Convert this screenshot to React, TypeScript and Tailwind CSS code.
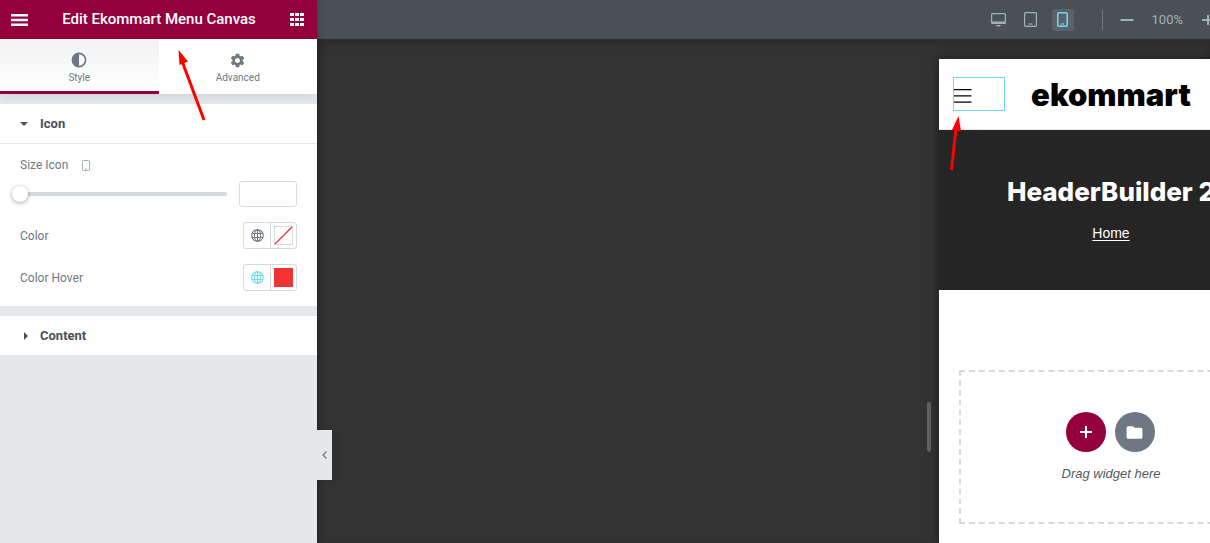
import { useState, type ReactNode } from "react";
import { MdFolder, MdSettings } from "react-icons/md";

type Device = "desktop" | "tablet" | "mobile";
type Tab = "style" | "advanced";

function MenuIcon() {
  return (
    <svg width="17" height="12" viewBox="0 0 17 12" fill="currentColor">
      <path d="M0 0h17v2.4H0zM0 4.8h17v2.4H0zM0 9.6h17V12H0z" />
    </svg>
  );
}

function AppsIcon() {
  return (
    <svg width="14" height="14" viewBox="0 0 14 14" fill="currentColor">
      <path d="M0 0h4v3H0zM5 0h4v3H5zM10 0h4v3h-4zM0 5h4v3H0zM5 5h4v3H5zM10 5h4v3h-4zM0 10h4v3H0zM5 10h4v3H5zM10 10h4v3h-4z" />
    </svg>
  );
}

function ContrastIcon() {
  return (
    <svg width="16" height="16" viewBox="0 0 16 16">
      <circle cx="8" cy="8" r="6.6" fill="none" stroke="currentColor" strokeWidth="1.6" />
      <path d="M8 1a7 7 0 0 0 0 14z" fill="currentColor" />
    </svg>
  );
}

function GlobeIcon() {
  return (
    <svg width="13" height="13" viewBox="0 0 13 13" fill="none" stroke="currentColor" strokeWidth="1.1">
      <circle cx="6.5" cy="6.5" r="5.8" />
      <ellipse cx="6.5" cy="6.5" rx="3" ry="5.8" />
      <path d="M6.5 1v11M1.2 4.5h10.6M1.2 8.5h10.6" />
    </svg>
  );
}

const deviceIcons: Record<Device, ReactNode> = {
  desktop: (
    <svg width="16" height="14" viewBox="0 0 16 14">
      <path d="M1.5 0h12A1.5 1.5 0 0 1 15 1.5v8a1.5 1.5 0 0 1-1.5 1.5h-12A1.5 1.5 0 0 1 0 9.5v-8A1.5 1.5 0 0 1 1.5 0zM1.2 1.2v7.3h12.6V1.2zM5 12h5l-1 1.5h-3z" fill="currentColor" fillRule="evenodd" />
    </svg>
  ),
  tablet: (
    <svg width="13" height="15" viewBox="0 0 13 15" fill="none" stroke="currentColor" strokeWidth="1.2">
      <rect x=".6" y=".6" width="11.8" height="13.8" rx="1" />
      <path d="M4.5 12h4" />
    </svg>
  ),
  mobile: (
    <svg width="11" height="15" viewBox="0 0 11 15" fill="none" stroke="currentColor" strokeWidth="1.5">
      <rect x=".75" y=".75" width="9.5" height="13.5" rx="1" />
      <path d="M3.8 12h3.4" strokeWidth="1.2" />
    </svg>
  ),
};

interface ColorControlProps {
  id: string;
  label: string;
  value: string | null;
  isGlobal?: boolean;
}

function ColorControl({ id, label, value, isGlobal = false }: ColorControlProps) {
  return (
    <div className="flex items-center justify-between">
      <label htmlFor={id}>{label}</label>
      <div className="flex h-[27px] w-[54px] rounded-[3px] border border-[#d5dadf]">
        <button
          type="button"
          aria-label={`${label} global value`}
          className={`flex flex-1 items-center justify-center border-r border-[#d5dadf] ${
            isGlobal ? "text-[#71d7f7]" : "text-[#6d7882]"
          }`}
        >
          <GlobeIcon />
        </button>
        <button id={id} type="button" className="flex w-[25px] items-center justify-center">
          {value ? (
            <span className="size-[19px]" style={{ backgroundColor: value }} />
          ) : (
            <svg width="19" height="19" viewBox="0 0 19 19" fill="none">
              <rect x=".5" y=".5" width="18" height="18" stroke="#d5dadf" />
              <path d="M1 18L18 1" stroke="#f03434" strokeWidth="1.2" />
            </svg>
          )}
        </button>
      </div>
    </div>
  );
}

interface SectionProps {
  title: string;
  defaultOpen?: boolean;
  children?: ReactNode;
}

function Section({ title, defaultOpen = false, children }: SectionProps) {
  const [open, setOpen] = useState(defaultOpen);

  return (
    <section className="mt-2.5 bg-white">
      <button
        type="button"
        aria-expanded={open}
        onClick={() => setOpen(!open)}
        className="flex h-[39px] w-full items-center px-5 text-[13px] font-bold text-[#495157]"
      >
        <span className="flex w-5">
          <svg width="8" height="8" viewBox="0 0 8 8" fill="currentColor">
            <path d={open ? "M0 2h8L4 6z" : "M4 0l4 4-4 4z"} />
          </svg>
        </span>
        {title}
      </button>
      {open && children && <div className="border-t border-[#e6e9ec] px-5 pt-[11px] pb-[15px]">{children}</div>}
    </section>
  );
}

function Panel() {
  const [tab, setTab] = useState<Tab>("style");
  const [size, setSize] = useState("");

  const tabs: { id: Tab; label: string; icon: ReactNode }[] = [
    { id: "style", label: "Style", icon: <ContrastIcon /> },
    { id: "advanced", label: "Advanced", icon: <MdSettings size={17} /> },
  ];

  return (
    <aside className="relative z-10 flex w-[317px] shrink-0 flex-col bg-[#e4e8eb] text-xs text-[#6d7882] shadow-[0_0_8px_rgba(0,0,0,0.3)]">
      <header className="flex h-[39px] items-center justify-between bg-[#93003c] pr-[13px] pl-[11px] text-white">
        <button type="button" aria-label="Menu">
          <MenuIcon />
        </button>
        <h1 className="text-[15px] font-medium">Edit Ekommart Menu Canvas</h1>
        <button type="button" aria-label="Widgets">
          <AppsIcon />
        </button>
      </header>

      <div role="tablist" className="flex h-[55px] bg-white shadow-[0_2px_10px_rgba(0,0,0,0.1)]">
        {tabs.map((t) => (
          <button
            key={t.id}
            type="button"
            role="tab"
            aria-selected={tab === t.id}
            onClick={() => setTab(t.id)}
            className={`flex flex-1 flex-col items-center border-b-[3px] pt-3 text-[10px] ${
              tab === t.id ? "border-[#93003c] bg-linear-to-b from-[#f1f2f3] to-white" : "border-transparent"
            }`}
          >
            <span className="flex h-[18px] items-center">{t.icon}</span>
            <span className="leading-[18px]">{t.label}</span>
          </button>
        ))}
      </div>

      <Section title="Icon" defaultOpen>
        <div className="flex h-5 items-center gap-3.5">
          <label htmlFor="size-icon">Size Icon</label>
          <svg width="8" height="11" viewBox="0 0 8 11" fill="none" stroke="#a4afb7">
            <rect x=".5" y=".5" width="7" height="10" rx="1" />
            <path d="M3 9h2" />
          </svg>
        </div>
        <div className="mt-1.5 mb-[15px] flex items-center gap-3">
          <input
            id="size-icon"
            type="range"
            min="0"
            max="300"
            value={size || "0"}
            onChange={(e) => setSize(e.target.value)}
            className="-ml-2 h-4 min-w-0 flex-1 appearance-none bg-transparent [&::-webkit-slider-runnable-track]:h-1 [&::-webkit-slider-runnable-track]:rounded-full [&::-webkit-slider-runnable-track]:bg-[#d5dadf] [&::-webkit-slider-thumb]:-mt-1.5 [&::-webkit-slider-thumb]:size-4 [&::-webkit-slider-thumb]:appearance-none [&::-webkit-slider-thumb]:rounded-full [&::-webkit-slider-thumb]:bg-white [&::-webkit-slider-thumb]:shadow-[0_1px_4px_rgba(0,0,0,0.35)]"
          />
          <input
            type="number"
            aria-label="Size Icon value"
            value={size}
            onChange={(e) => setSize(e.target.value)}
            className="h-[26px] w-[58px] rounded-[3px] border border-[#d5dadf] px-2"
          />
        </div>
        <div className="flex flex-col gap-[15px]">
          <ColorControl id="icon-color" label="Color" value={null} />
          <ColorControl id="icon-color-hover" label="Color Hover" value="#f03434" isGlobal />
        </div>
      </Section>

      <Section title="Content" />

      <button
        type="button"
        aria-label="Hide panel"
        className="absolute bottom-[63px] left-full flex h-[50px] w-[15px] items-center justify-center bg-[#e4e8eb] text-[#6d7882] shadow-[3px_1px_5px_rgba(0,0,0,0.1)]"
      >
        <svg width="5" height="8" viewBox="0 0 5 8" fill="none" stroke="currentColor" strokeWidth="1.2">
          <path d="M4.5 .5L1 4l3.5 3.5" />
        </svg>
      </button>
    </aside>
  );
}

function ResponsiveBar() {
  const [device, setDevice] = useState<Device>("mobile");
  const [zoom, setZoom] = useState(100);

  return (
    <div className="flex h-[39px] shrink-0 items-center justify-end overflow-hidden bg-[#495157] text-[#a4afb7]">
      <div className="flex gap-2.5">
        {(["desktop", "tablet", "mobile"] as Device[]).map((d) => (
          <button
            key={d}
            type="button"
            aria-label={d}
            onClick={() => setDevice(d)}
            className={`flex size-[22px] items-center justify-center rounded-[3px] ${
              device === d ? "bg-[#5b636a] text-[#71d7f7]" : ""
            }`}
          >
            {deviceIcons[d]}
          </button>
        ))}
      </div>
      <div className="-mr-1.5 ml-7 flex h-5 items-center gap-[17px] border-l border-[#6d7882] pl-4 text-[13px]">
        <button type="button" aria-label="Zoom out" onClick={() => setZoom(zoom - 10)}>
          <svg width="16" height="16" viewBox="0 0 16 16" stroke="currentColor" strokeWidth="2">
            <path d="M1.5 8h13" />
          </svg>
        </button>
        <span>{zoom}%</span>
        <button type="button" aria-label="Zoom in" onClick={() => setZoom(zoom + 10)}>
          <svg width="16" height="16" viewBox="0 0 16 16" stroke="currentColor" strokeWidth="2">
            <path d="M2 8h12M8 3v10" />
          </svg>
        </button>
      </div>
    </div>
  );
}

function Preview() {
  return (
    <div className="-mr-[73px] flex w-[344px] shrink-0 flex-col bg-white shadow-[0_0_10px_rgba(0,0,0,0.5)]">
      <header className="grid h-[71px] grid-cols-[1fr_auto_1fr] items-center border-b border-[#e5e5e5] px-3.5">
        <button
          type="button"
          aria-label="Open menu"
          className="flex h-[34px] w-[52px] items-center border border-[#71d7f7] pt-1 text-black"
        >
          <svg width="18" height="14" viewBox="0 0 18 14" fill="currentColor">
            <path d="M0 0h17.5v1.2H0zM0 6.2h17.5v1.4H0zM0 12.6h17.5v1.2H0z" />
          </svg>
        </button>
        <a href="#" className="font-['Inter',sans-serif] text-[31px] leading-none font-black text-black">
          ekommart
        </a>
      </header>

      <div className="flex h-40 flex-col items-center bg-[#252525] pt-[42px] text-white">
        <h2 className="font-['Inter',sans-serif] text-[26px] leading-10 font-extrabold whitespace-nowrap">
          HeaderBuilder 2
        </h2>
        <a href="#" className="mt-[11px] font-['Liberation_Sans',sans-serif] text-sm leading-5 underline underline-offset-2">
          Home
        </a>
      </div>

      <div className="mx-5 mt-20 flex h-[154px] flex-col items-center border-2 border-dashed border-[#d5dadf] pt-10">
        <div className="mr-0.5 flex gap-[9px] text-white">
          <button
            type="button"
            aria-label="Add new section"
            className="flex size-10 items-center justify-center rounded-full bg-[#93003c]"
          >
            <svg width="12" height="12" viewBox="0 0 12 12" stroke="currentColor" strokeWidth="2">
              <path d="M0 6h12M6 0v12" />
            </svg>
          </button>
          <button
            type="button"
            aria-label="Add template"
            className="flex size-10 items-center justify-center rounded-full bg-[#6d7882]"
          >
            <MdFolder size={19} />
          </button>
        </div>
        <p className="mt-3 font-['Liberation_Sans',sans-serif] text-[13px] leading-5 text-[#54595f] italic">
          Drag widget here
        </p>
      </div>
    </div>
  );
}

export default function App() {
  return (
    <div className="relative flex h-screen overflow-hidden font-['Roboto',sans-serif]">
      <Panel />
      <main className="flex min-w-0 flex-1 flex-col bg-[#333]">
        <ResponsiveBar />
        <div className="flex flex-1 justify-end overflow-hidden pt-5 shadow-[inset_0_4px_8px_rgba(0,0,0,0.2)]">
          <div className="mr-2 flex items-end pb-[91px]">
            <div className="h-[50px] w-1 rounded-full bg-[#616161]" />
          </div>
          <Preview />
        </div>
      </main>

      {/* callout arrows */}
      <svg
        width="30"
        height="74"
        viewBox="0 0 30 74"
        className="pointer-events-none absolute top-12 left-[177px] z-20"
        fill="#f00"
      >
        <path d="M5 13L27 72" stroke="#f00" strokeWidth="3" />
        <path d="M1.5 2L11 13.5L2.5 17z" />
      </svg>
      <svg
        width="16"
        height="58"
        viewBox="0 0 16 58"
        className="pointer-events-none absolute top-[114px] right-[248px] z-20"
        fill="#f00"
      >
        <path d="M10 14L5.5 56" stroke="#f00" strokeWidth="3" />
        <path d="M12.5 2L15 17L6 16z" />
      </svg>
    </div>
  );
}
